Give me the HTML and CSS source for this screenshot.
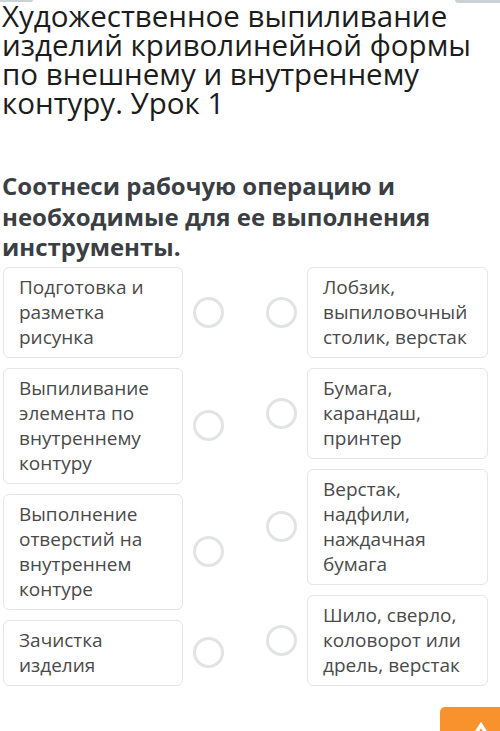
FILE: index.html
```html
<!DOCTYPE html>
<html lang="ru">
<head>
<meta charset="utf-8">
<link rel="stylesheet" href="styles.css">
</head>
<body>
<div class="edge edge-left"></div>
<div class="edge edge-right"></div>
<main class="page">
  <h1 class="title">Художественное выпиливание изделий криволинейной формы по внешнему и внутреннему контуру. Урок 1</h1>
  <h2 class="question">Соотнеси рабочую операцию и необходимые для ее выполнения инструменты.</h2>
  <div class="match">
    <div class="col col-left">
      <div class="row"><div class="card">Подготовка и разметка рисунка</div><span class="dot"></span></div>
      <div class="row"><div class="card">Выпиливание элемента по внутреннему контуру</div><span class="dot"></span></div>
      <div class="row"><div class="card">Выполнение отверстий на внутреннем контуре</div><span class="dot"></span></div>
      <div class="row"><div class="card">Зачистка изделия</div><span class="dot"></span></div>
    </div>
    <div class="col col-right">
      <div class="row"><span class="dot"></span><div class="card">Лобзик, выпиловочный столик, верстак</div></div>
      <div class="row"><span class="dot"></span><div class="card">Бумага, карандаш, принтер</div></div>
      <div class="row"><span class="dot"></span><div class="card">Верстак, надфили, наждачная бумага</div></div>
      <div class="row"><span class="dot"></span><div class="card">Шило, сверло, коловорот или дрель, верстак</div></div>
    </div>
  </div>
</main>
<div class="fab">
  <svg width="24" height="24" viewBox="0 0 24 24"><polyline points="5,17 12,6 19,17" fill="none" stroke="#fff" stroke-width="3.5" stroke-linejoin="miter"/></svg>
</div>
</body>
</html>
```

FILE: styles.css
```css
html, body {
  margin: 0;
  padding: 0;
  background: #ffffff;
}
body {
  font-family: "Open Sans", "Noto Sans", sans-serif;
}
.page {
  padding-top: 1px;
}
.title {
  margin: 0;
  padding: 0 8px 0 2px;
  font-size: 29.5px;
  line-height: 29px;
  font-weight: 400;
  color: #1c1c1c;
}
.question {
  margin: 54px 0 0 0;
  padding: 0 8px 0 2px;
  font-size: 24px;
  line-height: 30.5px;
  font-weight: 700;
  color: #3b3f44;
}
.match {
  display: flex;
  gap: 42px;
  padding: 4px 12px 0 3px;
}
.col {
  display: flex;
  flex-direction: column;
  gap: 10px;
}
.row {
  display: flex;
  align-items: center;
  gap: 10px;
}
.col-left .card {
  width: 180px;
}
.col-right .card {
  width: 181px;
}
.card {
  box-sizing: border-box;
  padding: 7px 6px 7px 15px;
  border: 1px solid #e3e5e6;
  border-radius: 6px;
  background: #fff;
  font-size: 19px;
  line-height: 25px;
  color: #4a4a4a;
}
.dot {
  box-sizing: border-box;
  width: 31px;
  height: 31px;
  border: 3px solid #e2e3e3;
  border-radius: 50%;
  background: #fff;
  flex: none;
}
.fab {
  position: fixed;
  left: 440px;
  top: 707px;
  width: 80px;
  height: 50px;
  background: #f7922d;
  border-radius: 5px;
  display: flex;
  justify-content: flex-start;
  padding: 12px 0 0 29px;
  box-sizing: border-box;
}
.edge {
  position: fixed;
  top: 0;
  height: 3px;
  background: #cbd2d6;
}
.edge-left {
  left: 0;
  width: 33px;
  height: 2px;
  border-radius: 0 0 4px 0;
}
.edge-right {
  right: 0;
  width: 45px;
  border-radius: 0 0 0 6px;
}
```
